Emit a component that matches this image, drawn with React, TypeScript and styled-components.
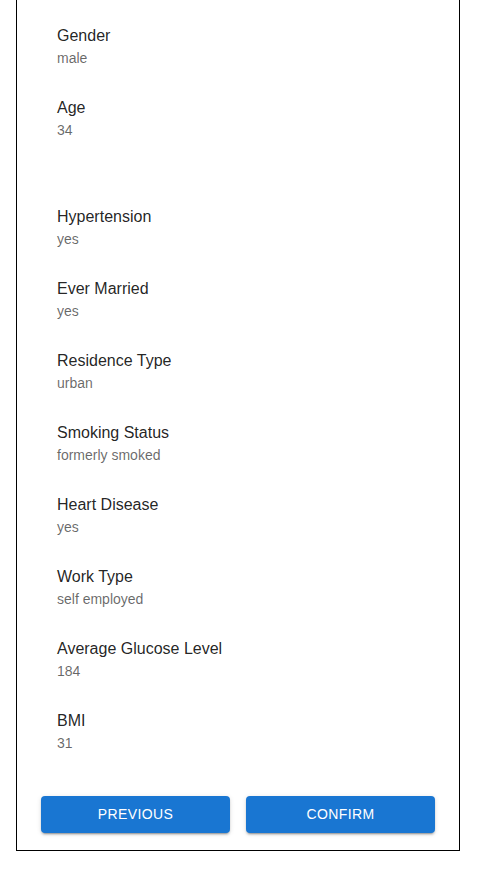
import React from "react";
import styled, { createGlobalStyle } from "styled-components";

const GlobalStyle = createGlobalStyle`
  html, body { margin: 0; padding: 0; background: #fff; }
  body { font-family: "Liberation Sans", Arial, sans-serif; }
`;

const Card = styled.div`
  box-sizing: border-box;
  width: 444px;
  margin: 0 0 20px 16px;
  border: 1px solid #000;
  border-top: none;
  padding: 2px 24px 17px;
`;

const List = styled.ul`
  list-style: none;
  margin: 0;
  padding: 8px 0 0;
`;

const Item = styled.li<{ $gapBefore?: number }>`
  padding: 8px 16px;
  margin-top: ${(p) => p.$gapBefore ?? 0}px;
`;

const ItemText = styled.div`
  margin: 6px 0;
  display: flex;
  flex-direction: column;
`;

const Primary = styled.span`
  font-size: 16px;
  line-height: 24px;
  color: rgba(0, 0, 0, 0.87);
`;

const Secondary = styled.span`
  font-size: 14px;
  line-height: 20px;
  color: rgba(0, 0, 0, 0.6);
`;

const Actions = styled.div`
  display: grid;
  grid-template-columns: 1fr 1fr;
  gap: 16px;
  margin-top: 29px;
`;

const Button = styled.button`
  height: 36.5px;
  border: none;
  border-radius: 4px;
  background: #1976d2;
  color: #fff;
  font-family: "Liberation Sans", Arial, sans-serif;
  font-size: 14px;
  font-weight: 500;
  letter-spacing: 0.4px;
  text-transform: uppercase;
  padding: 6px 16px;
  cursor: pointer;
  box-shadow: 0px 3px 1px -2px rgba(0, 0, 0, 0.2),
    0px 2px 2px 0px rgba(0, 0, 0, 0.14), 0px 1px 5px 0px rgba(0, 0, 0, 0.12);
`;

const rows: { label: string; value: string; gap?: number }[] = [
  { label: "Gender", value: "male" },
  { label: "Age", value: "34" },
  { label: "Hypertension", value: "yes", gap: 37 },
  { label: "Ever Married", value: "yes" },
  { label: "Residence Type", value: "urban" },
  { label: "Smoking Status", value: "formerly smoked" },
  { label: "Heart Disease", value: "yes" },
  { label: "Work Type", value: "self employed" },
  { label: "Average Glucose Level", value: "184" },
  { label: "BMI", value: "31" },
];

export default function App() {
  return (
    <>
      <GlobalStyle />
      <Card>
        <List>
          {rows.map((r) => (
            <Item key={r.label} $gapBefore={r.gap}>
              <ItemText>
                <Primary>{r.label}</Primary>
                <Secondary>{r.value}</Secondary>
              </ItemText>
            </Item>
          ))}
        </List>
        <Actions>
          <Button>Previous</Button>
          <Button>Confirm</Button>
        </Actions>
      </Card>
    </>
  );
}
